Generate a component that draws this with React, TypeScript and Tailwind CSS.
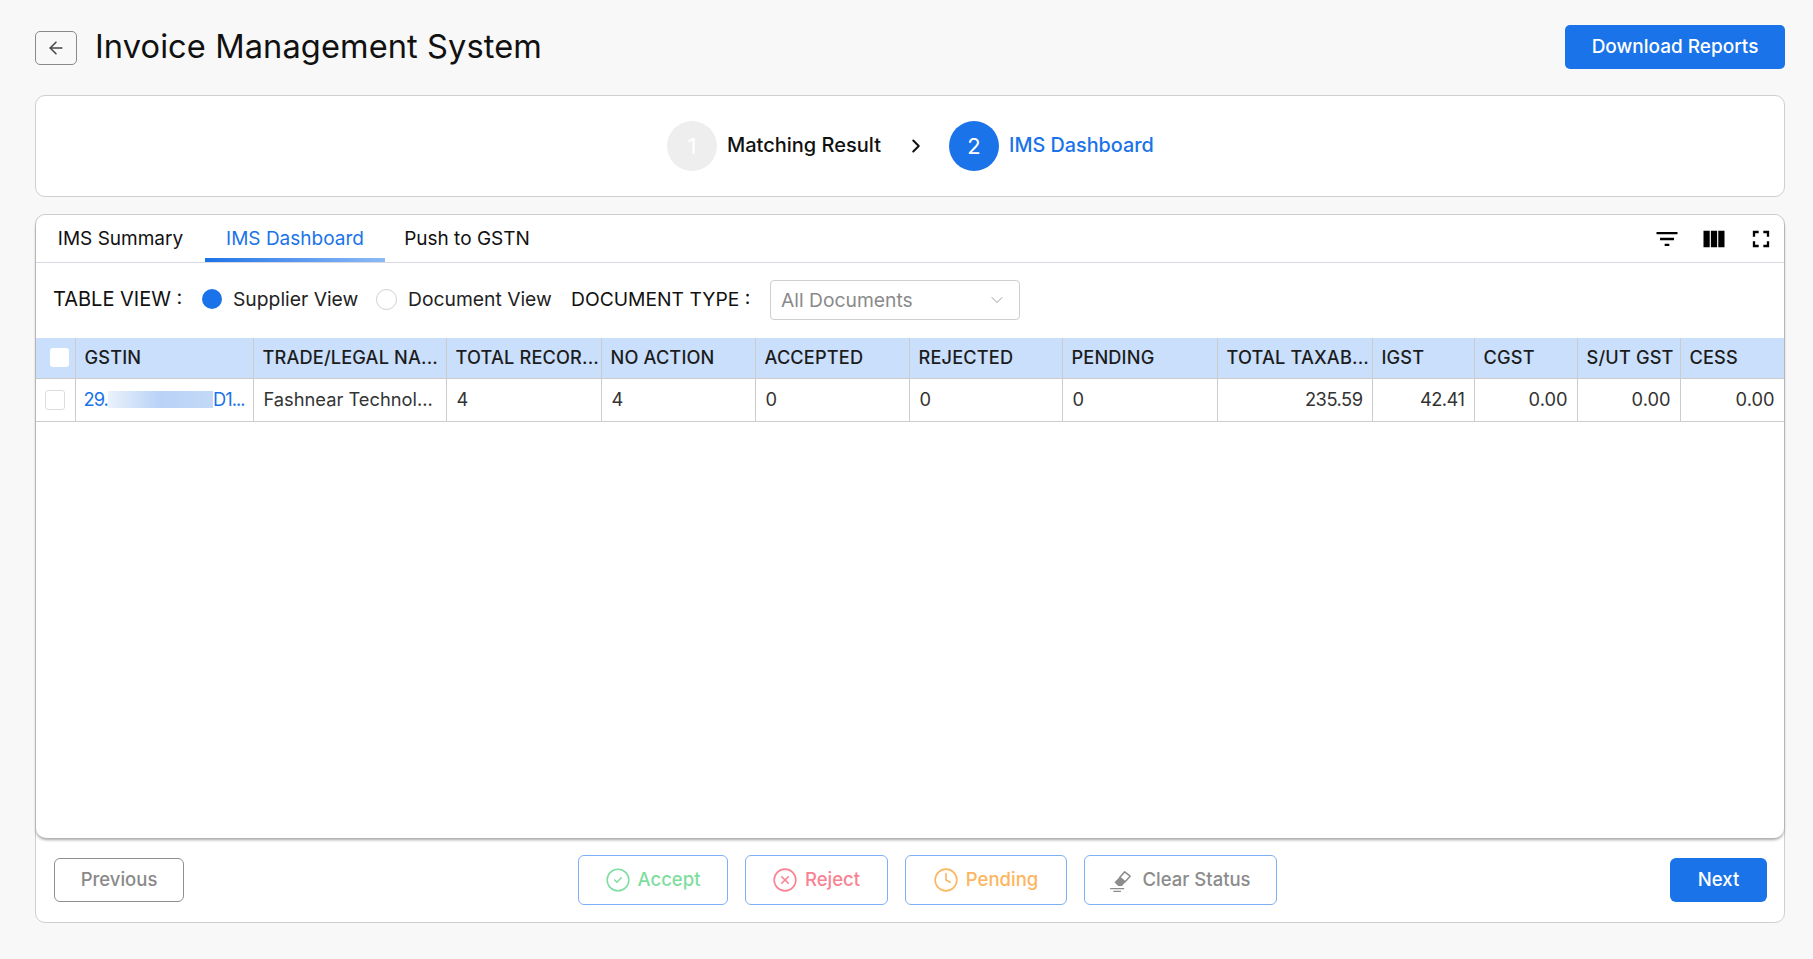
import React from "react";
import { ArrowLeft, ChevronRight, ChevronDown, CircleCheck, CircleX, Clock } from "lucide-react";
import { MdFilterList, MdViewColumn, MdFullscreen } from "react-icons/md";

const cols = [
  { w: 39, label: "" },
  { w: 178, label: "GSTIN" },
  { w: 193, label: "TRADE/LEGAL NA..." },
  { w: 155, label: "TOTAL RECOR..." },
  { w: 154, label: "NO ACTION" },
  { w: 154, label: "ACCEPTED" },
  { w: 153, label: "REJECTED" },
  { w: 155, label: "PENDING" },
  { w: 155, label: "TOTAL TAXAB..." },
  { w: 102, label: "IGST" },
  { w: 103, label: "CGST" },
  { w: 103, label: "S/UT GST" },
  { w: 104, label: "CESS" },
];

const left = ["Fashnear Technol...", "4", "4", "0", "0", "0"];
const right = ["235.59", "42.41", "0.00", "0.00", "0.00"];

function Eraser() {
  return (
    <svg width="26" height="26" viewBox="0 0 24 24" fill="none">
      <path d="M8.5 17.5 5 14 14.5 4.5l5 4L12 17.5z" fill="#8c8c8c" />
      <path d="M14.5 4.5l5 4-4.6 5.2-4.9-4.2z" fill="#fff" stroke="#8c8c8c" strokeWidth="1.4" strokeLinejoin="round" />
      <path d="M1 20h13M4 22.5h7" stroke="#8c8c8c" strokeWidth="1.3" />
    </svg>
  );
}

function ActionButton({ children, color, w }: { children: React.ReactNode; color: string; w: string }) {
  return (
    <button className={`${w} ${color} h-[50px] pb-[1px] flex items-center justify-center gap-[7px] bg-white border border-[#7db0f5] rounded-[6px] text-[18.5px] font-medium`}>
      {children}
    </button>
  );
}

export default function App() {
  return (
    <div
      className="min-h-[959px] bg-[#f8f8f8] pl-[35px] pr-[28px] pt-[25px] text-[#161616]"
      style={{ fontFamily: '"Inter", "Liberation Sans", sans-serif' }}
    >
      <header className="flex items-center justify-between h-[44px]">
        <div className="flex items-center gap-[18px]">
          <button className="w-[42px] h-[34px] mt-[2px] flex items-center justify-center border border-[#8a8a8a] rounded-[5px] bg-[#f8f8f8] text-[#444]">
            <ArrowLeft size={20} strokeWidth={1.8} />
          </button>
          <h1 className="text-[32.6px] leading-[44px] pb-[2px] font-normal tracking-[0.1px] text-[#111]">Invoice Management System</h1>
        </div>
        <button className="w-[220px] h-[44px] bg-[#1a73e8] text-white rounded-[5px] text-[19px] font-medium">Download Reports</button>
      </header>

      <section className="mt-[26px] h-[102px] bg-white border border-[#cfcfcf] rounded-[10px] flex items-center justify-center">
        <div className="flex items-center">
          <div className="w-[50px] h-[50px] rounded-full bg-[#eeeeee] text-white text-[22px] flex items-center justify-center">1</div>
          <span className="ml-[10px] w-[178px] pb-[2px] text-[20px] font-medium text-[#111] whitespace-nowrap">Matching Result</span>
          <ChevronRight size={22} strokeWidth={2.2} className="text-[#111]" />
          <div className="ml-[22px] w-[50px] h-[50px] rounded-full bg-[#1a73e8] text-white text-[22px] flex items-center justify-center">2</div>
          <span className="ml-[10px] w-[144px] pb-[1px] text-[19.8px] font-medium text-[#1a73e8] whitespace-nowrap">IMS Dashboard</span>
        </div>
      </section>

      <section className="mt-[17px] h-[709px] bg-white border border-[#cfcfcf] rounded-[10px] flex flex-col">
        <div className="h-[623px] rounded-[10px] bg-white shadow-[0_2px_3px_rgba(0,0,0,0.35)] flex flex-col overflow-hidden">
          <div className="h-[48px] shrink-0 border-b border-[#d8d8e0] flex items-center justify-between pr-[9px]">
            <div className="flex h-full">
              <div className="w-[169px] pt-[1px] flex items-center justify-center text-[19px] text-[#111]">IMS Summary</div>
              <div className="w-[180px] pt-[1px] flex items-center justify-center text-[19px] text-[#1a73e8] relative">
                IMS Dashboard
                <span className="absolute left-0 right-0 bottom-0 h-[4px] bg-gradient-to-r from-[#1a73e8] to-[#8cbaf6]" />
              </div>
              <div className="w-[164px] pt-[1px] flex items-center justify-center text-[19px] text-[#111]">Push to GSTN</div>
            </div>
            <div className="flex items-center gap-[19px] pr-[-1px] text-black">
              <MdFilterList size={28} />
              <MdViewColumn size={28} />
              <MdFullscreen size={28} />
            </div>
          </div>

          <div className="h-[75px] shrink-0 flex items-center pb-[3px] pl-[17px] text-[19.3px]">
            <span className="w-[149px] text-[20px] text-[#111] whitespace-nowrap">TABLE VIEW :</span>
            <span className="w-[20px] h-[20px] rounded-full bg-[#1a73e8]" />
            <span className="ml-[11px] w-[143px] text-[#222] whitespace-nowrap">Supplier View</span>
            <span className="w-[21px] h-[21px] rounded-full border border-[#cfcfcf] bg-white" />
            <span className="ml-[11px] w-[163px] text-[#222] whitespace-nowrap">Document View</span>
            <span className="w-[199px] text-[#111] whitespace-nowrap">DOCUMENT TYPE :</span>
            <div className="w-[250px] h-[40px] mt-[2px] border border-[#cfcfcf] rounded-[4px] flex items-center justify-between pl-[10px] pr-[12px] text-[#8a8a8a]">
              <span>All Documents</span>
              <ChevronDown size={20} strokeWidth={1} className="text-[#888]" />
            </div>
          </div>

          <table className="table-fixed w-[1748px] border-collapse text-[18.3px]">
            <colgroup>
              {cols.map((c, i) => (
                <col key={i} style={{ width: c.w }} />
              ))}
            </colgroup>
            <thead>
              <tr className="h-[40px] bg-[#c9dffc]">
                {cols.map((c, i) => (
                  <th key={i} className="border-r border-b border-[#cccccc] last:border-r-[#c4c4c4] pl-[9px] pr-[6px] text-left font-medium text-[18.2px] tracking-[0.15px] text-[#1c1c1c] whitespace-nowrap overflow-hidden">
                    {i === 0 ? <span className="block ml-[5px] w-[19px] h-[19px] bg-white rounded-[3px]" /> : c.label}
                  </th>
                ))}
              </tr>
            </thead>
            <tbody>
              <tr className="h-[43px] text-[#333]">
                <td className="border-r border-b border-[#cccccc] px-[9px]">
                  <span className="block w-[20px] h-[20px] border border-[#dddddd] rounded-[3px]" />
                </td>
                <td className="border-r border-b border-[#cccccc] px-[8px] text-[#1a73e8] whitespace-nowrap overflow-hidden">
                  <span className="flex items-center tracking-[-1px]">
                    29.
                    <span className="w-[106px] h-[17px] bg-gradient-to-r from-[#eaf2fc] via-[#b9d2f6] to-[#c3d9f7]" />
                    D1...
                  </span>
                </td>
                {left.map((v, i) => (
                  <td key={i} className="border-r border-b border-[#cccccc] pl-[10px] pr-[9px] whitespace-nowrap overflow-hidden">{v}</td>
                ))}
                {right.map((v, i) => (
                  <td key={i} className={`border-r border-b border-[#cccccc] px-[9px] text-right whitespace-nowrap ${i < 2 ? "tracking-[-0.5px]" : ""}`}>{v}</td>
                ))}
              </tr>
            </tbody>
          </table>
        </div>

        <div className="flex-1 flex items-center justify-between pl-[18px] pr-[17px]">
          <button className="w-[130px] h-[44px] pb-[1px] border border-[#8f8f8f] rounded-[6px] bg-white text-[#8a8a8a] text-[18.5px] font-medium">Previous</button>
          <div className="flex items-center gap-[17px]">
            <ActionButton w="w-[150px]" color="text-[#7fdda0]">
              <CircleCheck size={26} strokeWidth={1.4} /> Accept
            </ActionButton>
            <ActionButton w="w-[143px]" color="text-[#f98392]">
              <CircleX size={26} strokeWidth={1.5} /> Reject
            </ActionButton>
            <ActionButton w="w-[162px]" color="text-[#fdb560]">
              <Clock size={26} strokeWidth={1.5} /> Pending
            </ActionButton>
            <ActionButton w="w-[193px]" color="text-[#8c8c8c]">
              <Eraser /> Clear Status
            </ActionButton>
          </div>
          <button className="w-[97px] h-[44px] pb-[1px] rounded-[6px] bg-[#1a73e8] text-white text-[18.5px] font-medium">Next</button>
        </div>
      </section>
    </div>
  );
}
